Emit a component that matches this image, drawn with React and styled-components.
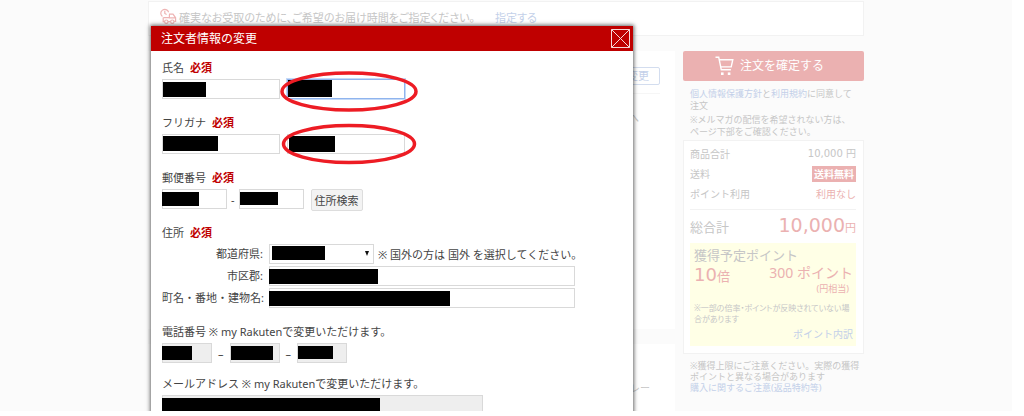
import React from 'react'
import styled, { createGlobalStyle } from 'styled-components'

const GlobalStyle = createGlobalStyle`
* { box-sizing: border-box; }
body {
  margin: 0;
  background: #fff;
  color: #444;
  font-family: "Noto Sans", "Noto Sans CJK JP", sans-serif;
  font-size: 10px;
}
p, h1, h2 { margin: 0; font-weight: 400; }
input, select, button { font: inherit; color: inherit; }
a { text-decoration: none; }
`

const Page = styled.div`
  height: calc(100vh - 5px);
  margin-right: 12px;
  background: #fbfbfb;
  overflow: hidden;
`

const Container = styled.div`
  position: relative;
  max-width: 716px;
  height: 100%;
  margin: 0 auto;
  padding-top: 1px;
  color: #c6c6c6;
`

const Notice = styled.div`
  display: flex;
  align-items: center;
  gap: 2px;
  height: 35px;
  padding: 0 11px 4px;
  background: #fff;
  border: 1px solid #f2f2f2;
  font-size: 11px;
  font-feature-settings: "palt";
  white-space: nowrap;
`

const Link = styled.a`
  color: #c3d0e9;
`

const NoticeLink = styled(Link)`
  margin-left: 18px;
`

const Columns = styled.div`
  display: flex;
  gap: 8px;
  margin-top: 15px;
`

const Main = styled.main`
  flex: 1;
  display: flex;
  flex-direction: column;
  gap: 15px;
`

const Panel = styled.section`
  min-height: ${(p) => p.$height}px;
  padding: 16px 15px;
  background: #fff;
`

const PanelHead = styled.div`
  display: flex;
  justify-content: flex-end;
  padding-bottom: 8px;
  border-bottom: 1px solid #f6f6f6;
`

const ChangeButton = styled.button`
  height: 18px;
  padding: 0 10px;
  background: #fff;
  border: 1px solid #d3ddef;
  border-radius: 2px;
  color: #c3d0e9;
  font-size: 11px;
  line-height: 16px;
`

const PanelText = styled.p`
  padding: ${(p) => p.$top}px ${(p) => p.$right}px 0 0;
  text-align: right;
  line-height: 16px;
`

const Side = styled.aside`
  width: 181px;
  line-height: 12px;
`

const OrderButton = styled.button`
  display: flex;
  align-items: center;
  justify-content: center;
  gap: 6px;
  width: 100%;
  height: 30px;
  padding: 0 14px 0 6px;
  background: #ebb1b1;
  border: none;
  border-radius: 2px;
  color: #fff;
  font-size: 12px;
`

const Small = styled.p`
  padding: 0 0 0 7px;
  margin-top: ${(p) => p.$top}px;
  font-size: 9px;
  line-height: ${(p) => p.$line || 12}px;
  white-space: nowrap;
`

const Card = styled.div`
  margin-top: 2px;
  padding: 3px 7px 7px 6px;
  background: #fff;
  border: 1px solid #f2f2f2;
`

const Row = styled.div`
  display: flex;
  align-items: center;
  justify-content: space-between;
  height: 20px;
`

const Num = styled.span`
  font-family: "DejaVu Sans", "Noto Sans CJK JP", sans-serif;
`

const Free = styled.span`
  padding: 0 2px;
  background: #ebb1b1;
  color: #fff;
  font-weight: 700;
  line-height: 16px;
`

const Red = styled.span`
  color: #ebb1b1;
`

const Total = styled.div`
  display: flex;
  align-items: center;
  justify-content: space-between;
  height: 34px;
  margin-top: 5px;
  border-top: 1px solid #f2f2f2;
  font-size: 13px;
`

const Amount = styled.span`
  color: #ebb1b1;
  font-size: 11px;
  line-height: 24px;
`

const Big = styled(Num)`
  font-size: ${(p) => p.$size}px;
`

const Points = styled.div`
  padding: 4px 3px 4px 4px;
  background: #ffffe6;
`

const PointsTitle = styled.h2`
  font-size: 13px;
  line-height: 16px;
`

const PointsRow = styled.div`
  display: flex;
  align-items: flex-start;
  justify-content: space-between;
  color: #ebb1b1;
  font-size: 13px;
  line-height: 24px;
`

const Earned = styled.div`
  font-size: 14px;
  line-height: 20px;
  text-align: right;
`

const Yen = styled.div`
  padding-right: 4px;
  font-size: 9px;
  line-height: 11px;
`

const PointsNote = styled.p`
  margin-top: 8px;
  font-size: 8px;
  line-height: 11px;
  white-space: nowrap;
  font-feature-settings: "palt";
`

const PointsLink = styled.p`
  padding: 2px 0 0;
  text-align: right;
  line-height: 16px;
`

const Modal = styled.div`
  position: absolute;
  top: 26px;
  bottom: -10px;
  left: 3px;
  width: 68%;
  max-width: 482px;
  background: #fff;
  box-shadow: 0 0 4px 1px rgba(0, 0, 0, .6);
  color: #444;
`

const ModalHead = styled.div`
  display: flex;
  align-items: center;
  justify-content: space-between;
  height: 25px;
  padding: 0 3px 2px 10px;
  background: #bf0000;
  color: #fff;
`

const ModalTitle = styled.h1`
  font-size: 12px;
`

const CloseButton = styled.button`
  display: flex;
  margin-top: 2px;
  padding: 0;
  background: none;
  border: none;
`

const Form = styled.form`
  padding: 9px 11px 0;
  font-size: 11px;
`

const Group = styled.fieldset`
  min-width: 0;
  margin: 0 0 ${(p) => p.$gap || 16}px;
  padding: 0;
  border: none;
`

const Legend = styled.legend`
  height: 16px;
  margin-bottom: 3px;
  padding: 0;
  line-height: 16px;
  white-space: nowrap;
`

const Required = styled.b`
  margin-left: 6px;
  color: #bf0000;
`

const Fields = styled.div`
  display: flex;
  align-items: center;
  gap: ${(p) => p.$gap}px;
  height: 20px;
  white-space: nowrap;
`

const FieldBox = styled.span`
  position: relative;
  display: block;
  flex: none;
  width: ${(p) => p.$width}px;
  height: 20px;
`

const Input = styled.input`
  display: block;
  width: 100%;
  height: 100%;
  padding: 0 4px;
  background: ${(p) => (p.readOnly ? '#eee' : '#fff')};
  border: 1px solid ${(p) => (p.$active ? '#8fb4ee' : '#d9d9d9')};
  box-shadow: ${(p) => (p.$active ? '0 0 0 1px #c5d9f7' : 'none')};
  outline: none;
`

const Select = styled.select`
  display: block;
  width: 100%;
  height: 100%;
  background: #fff;
  border: 1px solid #d9d9d9;
  appearance: none;
`

const Arrow = styled.span`
  position: absolute;
  right: 5px;
  top: 7px;
  border: 2px solid transparent;
  border-top: 5px solid #111;
  border-bottom: none;
  pointer-events: none;
`

const Mask = styled.span`
  position: absolute;
  left: ${(p) => p.$x || 0}px;
  top: ${(p) => p.$y || 3}px;
  width: ${(p) => p.$w}px;
  height: ${(p) => p.$h || 15}px;
  background: #000;
  pointer-events: none;
`

const SearchButton = styled.button`
  height: 22px;
  margin: 2px 0 0 3px;
  padding: 0 3px;
  background: #f3f3f3;
  border: 1px solid #ddd;
  border-radius: 2px;
  white-space: nowrap;
`

const Address = styled.div`
  display: grid;
  grid-template-columns: 101px 1fr;
  column-gap: 6px;
  row-gap: 2px;
  align-items: center;
`

const AddressLabel = styled.label`
  text-align: right;
  line-height: 16px;
  white-space: nowrap;
`

const Circles = styled.svg`
  position: absolute;
  left: 125px;
  top: 42px;
  pointer-events: none;
`

const TruckIcon = () => (
  <svg width="17" height="17" viewBox="0 0 17 17" fill="none" stroke="#eeb4b4" strokeWidth="1.2">
    <path d="M2.4 8.6A4 4 0 1 1 8.6 4.2M4.8 2.8v2.6l1.8 1" />
    <path d="M9 6.2h4l2.6 3.6v3.6h-1.4M10.4 13.6H8M4.6 13.6H3.2V9.4M9.4 6.4v3.4h6M3.4 9.6h6" />
    <circle cx="6.3" cy="13.7" r="1.7" />
    <circle cx="12.3" cy="13.7" r="1.7" />
  </svg>
)

const CartIcon = () => (
  <svg width="19" height="20" viewBox="0 0 19 20" fill="none" stroke="#fff" strokeWidth="1.4">
    <path d="M.5 1.2h3.2l2.6 12.6h9.6M4.2 3.7h13.6l-1.6 7.2H5.8" />
    <rect x="6" y="16.4" width="2.6" height="2.6" fill="#fff" stroke="none" />
    <rect x="12.8" y="16.4" width="2.6" height="2.6" fill="#fff" stroke="none" />
  </svg>
)

const CloseIcon = () => (
  <svg width="19" height="19" viewBox="0 0 19 19" fill="none" stroke="#f6dada">
    <path d="M.5.5h18v18H.5zM.5.5l18 18M18.5.5l-18 18" />
  </svg>
)

const Field = ({ width, label, id, mask, active, readOnly }) => (
  <FieldBox $width={width}>
    <Input id={id} aria-label={label} $active={active} readOnly={readOnly} />
    <Mask $x={mask[0]} $y={mask[1]} $w={mask[2]} $h={mask[3]} />
  </FieldBox>
)

const OrderSide = () => (
  <Side>
    <OrderButton><CartIcon />注文を確定する</OrderButton>
    <Small $top={7}>
      <Link href="#privacy">個人情報保護方針</Link>と<Link href="#terms">利用規約</Link>に同意して<br />注文
    </Small>
    <Small $top={2}>※メルマガの配信を希望されない方は、<br />ページ下部をご確認ください。</Small>
    <Card>
      <Row><span>商品合計</span><Num>10,000 円</Num></Row>
      <Row><span>送料</span><Free>送料無料</Free></Row>
      <Row><span>ポイント利用</span><Red>利用なし</Red></Row>
      <Total>
        <span>総合計</span>
        <Amount><Big $size={19}>10,000</Big>円</Amount>
      </Total>
      <Points>
        <PointsTitle>獲得予定ポイント</PointsTitle>
        <PointsRow>
          <span><Big $size={18}>10</Big>倍</span>
          <Earned>300 ポイント<Yen>(円相当)</Yen></Earned>
        </PointsRow>
        <PointsNote>※一部の倍率・ポイントが反映されていない場<br />合があります</PointsNote>
        <PointsLink><Link href="#points">ポイント内訳</Link></PointsLink>
      </Points>
    </Card>
    <Small $top={6} $line={11}>
      ※獲得上限にご注意ください。実際の獲得<br />ポイントと異なる場合があります<br />
      <Link href="#caution">購入に関するご注意(返品特約等)</Link>
    </Small>
  </Side>
)

const OrdererModal = () => (
  <Modal role="dialog" aria-labelledby="modal-title">
    <ModalHead>
      <ModalTitle id="modal-title">注文者情報の変更</ModalTitle>
      <CloseButton type="button" aria-label="閉じる"><CloseIcon /></CloseButton>
    </ModalHead>
    <Form>
      <Group>
        <Legend>氏名<Required>必須</Required></Legend>
        <Fields $gap={7}>
          <Field label="姓" width={118} mask={[1, 3, 43, 15]} />
          <Field label="名" width={118} mask={[1, 1, 44, 17]} active />
        </Fields>
      </Group>
      <Group>
        <Legend>フリガナ<Required>必須</Required></Legend>
        <Fields $gap={7}>
          <Field label="セイ" width={118} mask={[1, 2, 55, 15]} />
          <Field label="メイ" width={118} mask={[2, 2, 46, 16]} />
        </Fields>
      </Group>
      <Group>
        <Legend>郵便番号<Required>必須</Required></Legend>
        <Fields $gap={4}>
          <Field label="郵便番号 上3桁" width={65} mask={[0, 3, 37, 14]} />
          -
          <Field label="郵便番号 下4桁" width={65} mask={[1, 3, 38, 13]} />
          <SearchButton type="button">住所検索</SearchButton>
        </Fields>
      </Group>
      <Group>
        <Legend>住所<Required>必須</Required></Legend>
        <Address>
          <AddressLabel htmlFor="pref">都道府県:</AddressLabel>
          <Fields $gap={4}>
            <FieldBox $width={105}>
              <Select id="pref" />
              <Mask $x={3} $y={2} $w={53} $h={14} />
              <Arrow />
            </FieldBox>
            <span>※ 国外の方は 国外 を選択してください。</span>
          </Fields>
          <AddressLabel htmlFor="city">市区郡:</AddressLabel>
          <Field id="city" width={306} mask={[0, 3, 109, 15]} />
          <AddressLabel htmlFor="town">町名・番地・建物名:</AddressLabel>
          <Field id="town" width={306} mask={[0, 3, 181, 15]} />
        </Address>
      </Group>
      <Group $gap={13}>
        <Legend>電話番号 ※ my Rakutenで変更いただけます。</Legend>
        <Fields $gap={6}>
          <Field label="市外局番" width={50} mask={[0, 3, 30, 14]} readOnly />
          –
          <Field label="市内局番" width={50} mask={[1, 3, 42, 14]} readOnly />
          –
          <Field label="加入者番号" width={50} mask={[1, 3, 35, 13]} readOnly />
        </Fields>
      </Group>
      <Group>
        <Legend>メールアドレス ※ my Rakutenで変更いただけます。</Legend>
        <Field label="メールアドレス" width={321} mask={[0, 3, 218, 17]} readOnly />
      </Group>
    </Form>
    <Circles width="150" height="100" viewBox="0 0 150 100" fill="none" stroke="#ed1c24" strokeWidth="3.5">
      <ellipse cx="73" cy="23.5" rx="67" ry="18.5" />
      <ellipse cx="73" cy="76" rx="65.5" ry="18.5" />
    </Circles>
  </Modal>
)

const App = () => {
  return (
    <>
      <GlobalStyle />
      <Page>
        <Container>
          <Notice>
            <TruckIcon />
            <span>確実なお受取のために、ご希望のお届け時間をご指定ください。</span>
            <NoticeLink href="#time">指定する</NoticeLink>
          </Notice>
          <Columns>
            <Main>
              <Panel $height={278}>
                <PanelHead><ChangeButton>変更</ChangeButton></PanelHead>
                <PanelText $top={16} $right={21}>へ</PanelText>
              </Panel>
              <Panel $height={160}>
                <PanelText $top={20} $right={10}>レー</PanelText>
              </Panel>
            </Main>
            <OrderSide />
          </Columns>
          <OrdererModal />
        </Container>
      </Page>
    </>
  )
}

export default App
